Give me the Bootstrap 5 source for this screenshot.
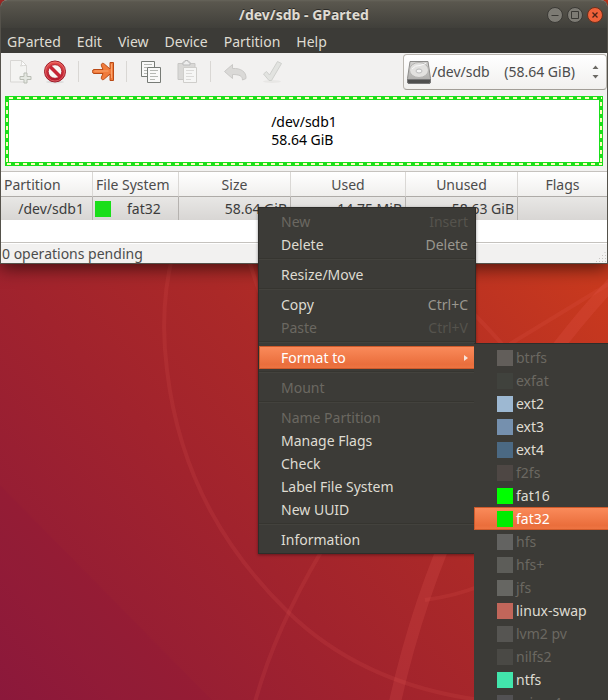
<!DOCTYPE html>
<html lang="en">
<head>
<meta charset="utf-8">
<meta name="viewport" content="width=device-width, initial-scale=1">
<title>/dev/sdb - GParted</title>
<link href="https://cdn.jsdelivr.net/npm/bootstrap@5.3.0/dist/css/bootstrap.min.css" rel="stylesheet">
<style>
:root{--ui:"Noto Sans","Open Sans",sans-serif;--dark:#3c3b37;--chrome:#f2f1f0}
body{font-family:var(--ui);font-size:14px;line-height:18px;color:#4c4c4c;background:#fff}
button,select{font:inherit;color:inherit}
.desktop{height:100vh;min-height:320px}
.wallpaper{z-index:0}
.gp-window{z-index:1;border:1px solid #55524b;border-top:0;border-radius:7px 7px 0 0;background:var(--chrome);box-shadow:0 4px 18px rgba(0,0,0,.6)}
.corners{background:#fff}
.titlebar{background:linear-gradient(#66645a 0,#5a574e 2px,#403f3a 28px);border-radius:6px 6px 0 0;height:28px;color:#dfdbd2;padding:2px 4px 0;display:grid;grid-template-columns:1fr auto 1fr}
.titlebar h1{font-size:14px;line-height:18px;text-shadow:0 -1px 0 #2c2b28}
.win-btn{width:16px;height:16px}
.menubar{background:var(--dark);height:25px;color:#dfdbd2;padding:2px 6px 0;gap:16px}
.plain-btn{border:0;background:none;padding:0}
.toolbar-strip{height:43px;padding:1px 0 0 6px}
.tool{width:36px;height:36px}
.tool svg,.win-btn svg{display:block}
.tool-sep{width:1px;height:21px;background:#d9d7d4;margin:0 12px 2px -1px}
.device-pick{height:36px;border:1px solid #b9b5af;border-bottom-color:#a19d97;border-radius:4px;background:linear-gradient(#fff,#f1f0ee);padding:0 7px 0 2px}
.device-pick select{border:0;background:none;appearance:none;outline:0;padding:0;width:152px}
.part-frame{background:#1ade1a;padding:1px;margin:0 4px 5px}
.part-dash{padding:2px;
 background:
 repeating-linear-gradient(90deg,#ffffbe 0 4px,transparent 4px 8px) 3px 0/100% 2px no-repeat,
 repeating-linear-gradient(90deg,#ffffbe 0 4px,transparent 4px 8px) 1px 100%/100% 2px no-repeat,
 repeating-linear-gradient(#ffffbe 0 4px,transparent 4px 8px) 0 5px/2px 100% no-repeat,
 repeating-linear-gradient(#ffffbe 0 4px,transparent 4px 8px) 100% 5px/2px 100% no-repeat}
.part-body{border:1px solid #1ade1a;background:#fff;color:#000;height:64px}
.list-pane{background:#fff;border-top:1px solid #c5c2be;border-bottom:1px solid #c5c2be;height:72px}
.part-table{table-layout:fixed;width:100%;border-collapse:separate;border-spacing:0}
.part-table th{font-weight:400;height:25px;padding:2px 3px 0;background:linear-gradient(#fff,#f0efed);border-right:1px solid #dad8d5;border-bottom:1px solid #aeaba7;text-align:center}
.part-table td{height:23px;padding:0 3px;background:linear-gradient(#e8e7e5,#d8d6d4);border-right:1px solid #b5b2af;color:#3c3c3c;text-align:right;white-space:nowrap}
.part-table td.fs-cell{padding-left:2px}
.part-table th:last-child,.part-table td:last-child{border-right:0}
.c-part{width:92px}.c-fs{width:86px}.c-size{width:112px}.c-used{width:115px}
.swatch{width:16px;height:16px;flex:none;display:block}
.statusbar{height:20px;border-top:1px solid #fff;padding:0 0 0 1px}
.ctx{background:var(--dark);border:1px solid #2e2d2a;padding:2px 0;margin:0;list-style:none;z-index:5;color:#dfdbd2}
.ctx-main{left:258px;top:207px;width:218px;box-shadow:0 1px 3px rgba(0,0,0,.4)}
.ctx-sub{left:215px;top:-3px;width:142px;z-index:6;border-left:0}
.ctx-item{display:flex;align-items:center;width:100%;height:23px;border:0;background:none;padding:0 7px 0 22px;text-align:left;white-space:nowrap}
.ctx-sub .ctx-item{gap:3px;padding:0 22px 0 23px}
.ctx-item kbd{margin-left:auto;background:none;padding:0;font:inherit;color:#9a978f}
.ctx-item:disabled{color:#6b6861}
.ctx-item:disabled kbd{color:#55534d}
.ctx-item.hot{color:#fff;background:linear-gradient(#fb8c5c,#ea6e3c 80%,#ee7644);box-shadow:inset 0 0 0 1px #ce5a2b}
.ctx-sep{height:7px;padding-top:2px}
.ctx-sep::before{content:"";display:block;height:2px;background:#363530;border-bottom:1px solid #43423d}
</style>
<script src="https://cdn.jsdelivr.net/npm/bootstrap@5.3.0/dist/js/bootstrap.bundle.min.js"></script>
</head>
<body>
<main class="desktop position-relative overflow-hidden">
<svg class="wallpaper position-absolute top-0 start-0 w-100 h-100" viewBox="0 0 608 700" preserveAspectRatio="xMidYMid slice" aria-hidden="true">
 <defs><linearGradient id="wall" gradientUnits="userSpaceOnUse" x1="0" y1="700" x2="540" y2="220"><stop offset="0" stop-color="#8c193a"/><stop offset=".4" stop-color="#a1232d"/><stop offset=".6" stop-color="#ab2928"/><stop offset=".8" stop-color="#b83023"/><stop offset="1" stop-color="#c8391e"/></linearGradient></defs>
 <rect width="608" height="700" fill="url(#wall)"/>
 <path d="M0 485L212 700H0z" fill="#8b1640" opacity=".1"/>
 <g fill="none" stroke="#f2645c" stroke-opacity=".13" stroke-width="4">
  <path d="M177 240Q158 300 167 370C180 480 230 555 287 611C340 663 405 690 480 700"/>
  <path d="M321 552Q275 630 255 702"/>
  <path d="M242 240L262 300M425 600Q455 596 480 586M470 310Q485 325 502 344M510 344L612 282"/>
  <path d="M615 280C535 365 440 500 395 702" stroke-width="12" stroke-opacity=".17"/>
 </g>
</svg>

<div class="corners">
<section class="gp-window position-relative" aria-label="GParted">
 <header class="titlebar align-items-center">
  <span></span>
  <h1 class="m-0 fw-bold">/dev/sdb - GParted</h1>
  <div class="d-flex justify-content-end gap-1">
   <button class="plain-btn win-btn" aria-label="Minimize"><svg width="16" height="16"><circle cx="8" cy="8" r="7.5" fill="#7d7b74" stroke="#3a3935"/><path d="M4.5 8.5h7" stroke="#3a3935"/></svg></button>
   <button class="plain-btn win-btn" aria-label="Maximize"><svg width="16" height="16"><circle cx="8" cy="8" r="7.5" fill="#7d7b74" stroke="#3a3935"/><path d="M4.5 4.5h7v7h-7z" fill="none" stroke="#3a3935"/></svg></button>
   <button class="plain-btn win-btn" aria-label="Close"><svg width="16" height="16"><circle cx="8" cy="8" r="7.5" fill="#f0623a" stroke="#6b2f1c"/><path d="M5.5 5.5l5 5m0-5l-5 5" stroke="#4b2418" stroke-width="1.3"/></svg></button>
  </div>
 </header>
 <nav class="menubar d-flex align-items-center" aria-label="Menu bar">
  <button class="plain-btn">GParted</button><button class="plain-btn">Edit</button><button class="plain-btn">View</button><button class="plain-btn">Device</button><button class="plain-btn">Partition</button><button class="plain-btn">Help</button>
 </nav>
 <div class="toolbar-strip d-flex align-items-start">
  <div class="d-flex align-items-center flex-grow-1">
   <button class="plain-btn tool" disabled aria-label="New"><svg width="36" height="36"><path d="M3.500 6.500h11l5 5v16.500h-16z" fill="#f4f4f2" stroke="#d8d7d4"/><path d="M14.500 6.500q1 4-1 5.500 3-1 6-.5z" fill="#fff" stroke="#d8d7d4"/><path d="M16.500 19.500h3v3.500h4v3h-4v3.500h-3v-3.500h-4v-3h4z" fill="#e5e8e2" stroke="#b9bdb4" transform="translate(.5 -.5)"/></svg></button>
   <button class="plain-btn tool" aria-label="Delete"><svg width="36" height="36"><defs><linearGradient id="no" x2="0" y2="1"><stop stop-color="#e8504c"/><stop offset="1" stop-color="#b3132b"/></linearGradient></defs><ellipse cx="12" cy="28" rx="9" ry="1.500" fill="#ddd"/><circle cx="12" cy="17.500" r="10.500" fill="url(#no)" stroke="#9d1b28"/><circle cx="12" cy="17.500" r="9.500" fill="none" stroke="#f08b84" stroke-opacity=".6"/><circle cx="12" cy="17.500" r="6.800" fill="#f8f7f5" stroke="#a31a2a" stroke-width=".8"/><path d="M7 12.500l10 10" stroke="#c62637" stroke-width="3.600"/></svg></button>
   <span class="tool-sep"></span>
   <button class="plain-btn tool" aria-label="Resize/Move"><svg width="36" height="36"><path d="M1.500 17.500q0-2 1.500-2h9l-1.500-3.500c-.8-2.500 1.200-3.500 2.800-2l5.700 5v-6.500h3.500v18h-3.500v-6.500l-5.700 5c-1.600 1.500-3.600.5-2.800-2l1.500-3.500h-9q-1.500 0-1.500-2z" fill="#f17c3c" stroke="#b94a16"/><path d="M3.500 17h14M20.500 10v14" stroke="#fba46c"/></svg></button>
   <span class="tool-sep"></span>
   <button class="plain-btn tool" aria-label="Copy"><svg width="36" height="36"><g fill="#f9f9f8" stroke="#777b76"><path d="M2.500 7.500h13v15h-13z"/><path d="M8.500 13.500h13v15h-13z"/></g><path d="M5 10.500h8M5 13.500h3M5 16.500h3M5 19.500h3M11 16.500h8M11 19.500h6M11 22.500h8M11 25.500h5" stroke="#b5b8b3"/></svg></button>
   <button class="plain-btn tool" disabled aria-label="Paste"><svg width="36" height="36"><path d="M3 9.500h17v16h-17z" fill="#d9d8d6" stroke="#c8c7c5"/><path d="M8 11v-3h2v-1.500h3v1.500h2v3z" fill="#eee" stroke="#bbb"/><path d="M8.500 13.500h13v15h-13z" fill="#f6f6f5" stroke="#cfcecb"/><path d="M11 16.500h8M11 19.500h6M11 22.500h8M11 25.500h5" stroke="#dbdad8"/></svg></button>
   <span class="tool-sep"></span>
   <button class="plain-btn tool" disabled aria-label="Undo"><svg width="36" height="36"><path d="M1.500 17.500l8-7v4c8-.5 14 3 13.500 10l-3.500 1.500c0-4-3-5.500-10-5.500v4z" fill="#dad9d7" stroke="#cac9c7" stroke-linejoin="round"/></svg></button>
   <button class="plain-btn tool" disabled aria-label="Apply"><svg width="36" height="36"><ellipse cx="13" cy="27.500" rx="9" ry="1.500" fill="#e8e7e5"/><path d="M4.500 20l3-2.500 3 3.500 8-13.500 4 2-10 17h-2.500z" fill="#e2e3e0" stroke="#cfd0cd" stroke-linejoin="round"/></svg></button>
  </div>
  <label class="device-pick d-flex align-items-center">
   <svg width="26" height="26"><defs><linearGradient id="hd" x2="0" y2="1"><stop stop-color="#d2d1cf"/><stop offset="1" stop-color="#aaa9a7"/></linearGradient></defs><path d="M4 2.500h18l2.500 17v3.500q0 1.500-2 1.500h-19q-2 0-2-1.500v-3.500z" fill="url(#hd)" stroke="#8d8c8a"/><ellipse cx="13" cy="11" rx="9.500" ry="7.500" fill="#e2e1df" stroke="#b4b3b1"/><ellipse cx="13" cy="12" rx="3" ry="2" fill="#f5f5f4" stroke="#bbb"/><path d="M6 10q3-4 8-3.500l6-2" fill="none" stroke="#fafafa"/><path d="M1.500 20.500h23v2.500q0 1.500-2 1.500h-19q-2 0-2-1.500z" fill="#4f4f4e" stroke="#777"/></svg>
   <select aria-label="Device"><option>/dev/sdb &nbsp;&nbsp;&nbsp;(58.64 GiB)</option></select>
   <svg class="ms-2" width="7" height="14" aria-hidden="true"><path d="M.5 4l3-3.500 3 3.500zM.5 10l3 3.500 3-3.500z" fill="#6b6964"/></svg>
  </label>
 </div>
 <div class="part-frame"><div class="part-dash"><div class="part-body d-flex flex-column align-items-center justify-content-center"><div><div>/dev/sdb1</div><div>58.64 GiB</div></div></div></div></div>
 <div class="list-pane">
  <table class="part-table">
   <thead><tr><th class="c-part text-start">Partition</th><th class="c-fs text-start">File System</th><th class="c-size">Size</th><th class="c-used">Used</th><th class="c-size">Unused</th><th>Flags</th></tr></thead>
   <tbody><tr><td class="pe-2">/dev/sdb1</td><td class="fs-cell"><span class="d-flex align-items-center gap-3"><svg class="swatch" aria-hidden="true"><rect width="16" height="16" fill="#1ade1a"/></svg>fat32</span></td><td>58.64 GiB</td><td>14.75 MiB</td><td>58.63 GiB</td><td></td></tr></tbody>
  </table>
 </div>
 <footer class="statusbar d-flex justify-content-between align-items-center"><span>0 operations pending</span>
  <svg class="align-self-end" width="12" height="12" aria-hidden="true"><path d="M1 10.500h10M4 7.500h7M7 4.500h4M9.500 1.500h1.500" stroke="#c9c7c4" stroke-dasharray="1 2"/></svg></footer>
</section>
</div>

<ul class="ctx ctx-main position-absolute" aria-label="Partition menu">
 <li><button class="ctx-item" disabled>New<kbd>Insert</kbd></button></li>
 <li><button class="ctx-item">Delete<kbd>Delete</kbd></button></li>
 <li class="ctx-sep"></li>
 <li><button class="ctx-item">Resize/Move</button></li>
 <li class="ctx-sep"></li>
 <li><button class="ctx-item">Copy<kbd>Ctrl+C</kbd></button></li>
 <li><button class="ctx-item" disabled>Paste<kbd>Ctrl+V</kbd></button></li>
 <li class="ctx-sep"></li>
 <li class="position-relative"><button class="ctx-item hot">Format to<svg class="ms-auto" width="4" height="8" aria-hidden="true"><path d="M0 1l4 3-4 3z" fill="#f8e4da"/></svg></button>
  <ul class="ctx ctx-sub position-absolute" aria-label="Format to">
   <li><button class="ctx-item" disabled><svg class="swatch"><rect width="16" height="16" fill="#625e5a"/></svg>btrfs</button></li>
   <li><button class="ctx-item" disabled><svg class="swatch"><rect width="16" height="16" fill="#40423d"/></svg>exfat</button></li>
   <li><button class="ctx-item"><svg class="swatch"><rect width="16" height="16" fill="#9db8d2"/></svg>ext2</button></li>
   <li><button class="ctx-item"><svg class="swatch"><rect width="16" height="16" fill="#7590ae"/></svg>ext3</button></li>
   <li><button class="ctx-item"><svg class="swatch"><rect width="16" height="16" fill="#4b6983"/></svg>ext4</button></li>
   <li><button class="ctx-item" disabled><svg class="swatch"><rect width="16" height="16" fill="#4e4744"/></svg>f2fs</button></li>
   <li><button class="ctx-item"><svg class="swatch"><rect width="16" height="16" fill="#00ff00"/></svg>fat16</button></li>
   <li><button class="ctx-item hot"><svg class="swatch"><rect width="16" height="16" fill="#00ec00"/></svg>fat32</button></li>
   <li><button class="ctx-item" disabled><svg class="swatch"><rect width="16" height="16" fill="#636361"/></svg>hfs</button></li>
   <li><button class="ctx-item" disabled><svg class="swatch"><rect width="16" height="16" fill="#5d5d59"/></svg>hfs+</button></li>
   <li><button class="ctx-item" disabled><svg class="swatch"><rect width="16" height="16" fill="#666662"/></svg>jfs</button></li>
   <li><button class="ctx-item"><svg class="swatch"><rect width="16" height="16" fill="#c1665a"/></svg>linux-swap</button></li>
   <li><button class="ctx-item" disabled><svg class="swatch"><rect width="16" height="16" fill="#565552"/></svg>lvm2 pv</button></li>
   <li><button class="ctx-item" disabled><svg class="swatch"><rect width="16" height="16" fill="#4a4945"/></svg>nilfs2</button></li>
   <li><button class="ctx-item"><svg class="swatch"><rect width="16" height="16" fill="#42e5ac"/></svg>ntfs</button></li>
   <li><button class="ctx-item" disabled><svg class="swatch"><rect width="16" height="16" fill="#525153"/></svg>reiser4</button></li>
  </ul>
 </li>
 <li class="ctx-sep"></li>
 <li><button class="ctx-item" disabled>Mount</button></li>
 <li class="ctx-sep"></li>
 <li><button class="ctx-item" disabled>Name Partition</button></li>
 <li><button class="ctx-item">Manage Flags</button></li>
 <li><button class="ctx-item">Check</button></li>
 <li><button class="ctx-item">Label File System</button></li>
 <li><button class="ctx-item">New UUID</button></li>
 <li class="ctx-sep"></li>
 <li><button class="ctx-item">Information</button></li>
</ul>
</main>
</body>
</html>
